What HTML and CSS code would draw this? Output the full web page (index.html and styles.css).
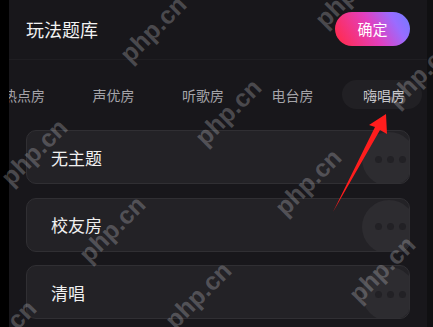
FILE: index.html
```html
<!DOCTYPE html>
<html>
<head>
<meta charset="utf-8">
<link rel="stylesheet" href="styles.css">
</head>
<body>
<div class="strip-left"></div>
<div class="panel">
  <div class="header">
    <div class="title">玩法题库</div>
    <div class="confirm">确定</div>
  </div>
  <div class="tabs">
    <div class="tab">热点房</div>
    <div class="tab">声优房</div>
    <div class="tab">听歌房</div>
    <div class="tab">电台房</div>
    <div class="tab active">嗨唱房</div>
  </div>
  <div class="list">
    <div class="card"><span class="label">无主题</span><div class="more"><i></i><i></i><i></i></div></div>
    <div class="card"><span class="label">校友房</span><div class="more"><i></i><i></i><i></i></div></div>
    <div class="card"><span class="label">清唱</span><div class="more"><i></i><i></i><i></i></div></div>
  </div>
</div>
<div class="strip-right"></div>

<div class="wm" style="left:133px;top:42px">php.cn</div>
<div class="wm" style="left:328px;top:7px">php.cn</div>
<div class="wm" style="left:208px;top:125px">php.cn</div>
<div class="wm" style="left:400px;top:87px">php.cn</div>
<div class="wm" style="left:14px;top:165px">php.cn</div>
<div class="wm" style="left:288px;top:195px">php.cn</div>
<div class="wm" style="left:92px;top:242px">php.cn</div>
<div class="wm" style="left:362px;top:282px">php.cn</div>
<div class="wm" style="left:178px;top:308px">php.cn</div>
<div class="wm" style="left:-17px;top:346px">php.cn</div>

<svg class="arrow" width="433" height="327" viewBox="0 0 433 327">
  <polygon points="386,114 369,125 375,127 333,212 380,130 387,134" fill="#ff1d1d"/>
</svg>
</body>
</html>
```

FILE: styles.css
```css
html, body {
  margin: 0;
  padding: 0;
  overflow: hidden;
}
body {
  width: 433px;
  height: 327px;
  display: flex;
  background: #000;
  font-family: "Noto Sans CJK SC", "Noto Sans", sans-serif;
  position: relative;
}
.strip-left {
  width: 9px;
  background: #000;
  flex: none;
}
.strip-right {
  flex: 1;
  background: #101012;
}
.panel {
  width: 418px;
  flex: none;
  height: 327px;
  background: #18171b;
  overflow: hidden;
  display: flex;
  flex-direction: column;
}
.header {
  height: 60px;
  box-sizing: border-box;
  border-bottom: 1px solid #1f1e22;
  display: flex;
  align-items: center;
  justify-content: space-between;
  padding: 0 17px 0 17px;
}
.title {
  color: #f2f2f2;
  font-size: 18px;
  margin-top: -2px;
}
.confirm {
  width: 75px;
  height: 34px;
  margin-top: -2px;
  border-radius: 17px;
  background: linear-gradient(60deg, #ff2c55 8%, #e23fbf 50%, #9a6cff 78%, #6f7cff 100%);
  color: #fff;
  font-size: 15px;
  display: flex;
  align-items: center;
  justify-content: center;
}
.tabs {
  display: flex;
  gap: 9.5px;
  margin-left: -25px;
  margin-top: 20px;
  height: 29px;
}
.tab {
  flex: none;
  width: 80px;
  height: 29px;
  border-radius: 15px;
  color: #a5a4a9;
  font-size: 14px;
  display: flex;
  align-items: center;
  justify-content: center;
}
.tab.active {
  background: #212024;
  color: #c6c5ca;
  padding-left: 4px;
  box-sizing: border-box;
}
.list {
  display: flex;
  flex-direction: column;
  gap: 13.5px;
  padding: 21px 17px 0 17px;
}
.card {
  height: 54px;
  box-sizing: border-box;
  border: 1px solid #302f33;
  border-radius: 10px;
  background: #232226;
  display: flex;
  align-items: center;
  position: relative;
  overflow: hidden;
  padding-left: 24px;
}
.label {
  color: #f0f0f0;
  font-size: 17px;
  flex: 1;
}
.more {
  position: absolute;
  left: 335px;
  top: 1px;
  width: 54px;
  height: 54px;
  border-radius: 50%;
  background: #2d2c30;
  display: flex;
  align-items: center;
  gap: 5px;
  padding-left: 13px;
  box-sizing: border-box;
}
.more i {
  width: 7px;
  height: 7px;
  border-radius: 50%;
  background: #222125;
}
.wm {
  position: absolute;
  font-family: "Liberation Sans", Arial, sans-serif;
  font-weight: bold;
  font-size: 25px;
  color: rgba(225, 225, 230, 0.26);
  transform: rotate(-45deg);
  transform-origin: left bottom;
  white-space: nowrap;
  line-height: 25px;
  pointer-events: none;
}
.arrow {
  position: absolute;
  left: 0;
  top: 0;
}
```
